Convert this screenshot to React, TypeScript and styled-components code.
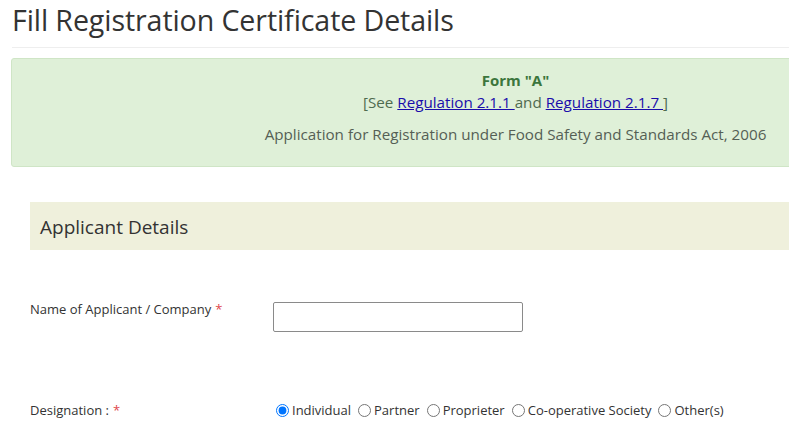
import React from 'react';
import styled, { createGlobalStyle } from 'styled-components';

const GlobalStyle = createGlobalStyle`
  html, body {
    margin: 0;
    padding: 0;
    background: #fff;
    overflow: hidden;
  }
  body {
    font-family: "Open Sans", "Noto Sans", sans-serif;
    color: #333;
  }
`;

const Page = styled.div`
  width: 1030px;
  padding: 0 0 0 11px;
`;

const PageTitle = styled.h1`
  margin: 0;
  padding: 1px 0 0 1px;
  font-size: 28.6px;
  font-weight: 400;
  line-height: 37px;
  color: #333;
  letter-spacing: -0.1px;
`;

const Rule = styled.hr`
  margin: 9px 0 10px 1px;
  border: 0;
  border-top: 1px solid #eee;
`;

const Alert = styled.div`
  box-sizing: border-box;
  width: 1009px;
  height: 109px;
  padding: 11px 15px;
  background: #dff0d8;
  border: 1px solid #cfe5c6;
  border-radius: 3px;
  text-align: center;
  color: #4f6b4f;
`;

const FormName = styled.div`
  font-size: 15px;
  font-weight: 700;
  color: #3c763d;
  line-height: 20px;
`;

const SeeLine = styled.div`
  font-size: 15.2px;
  line-height: 24px;
  color: #4f6b4f;
`;

const RegLink = styled.a`
  color: #1a0dab;
  text-decoration: underline;
`;

const ActLine = styled.div`
  margin-top: 8px;
  font-size: 15.2px;
  line-height: 24px;
  color: #555f55;
`;

const Panel = styled.div`
  padding: 35px 0 0 19px;
`;

const SectionHead = styled.div`
  height: 48px;
  display: flex;
  align-items: center;
  padding: 2px 0 0 10px;
  box-sizing: border-box;
  background: #eff0dc;
  font-size: 19px;
  color: #333;
`;

const FieldRow = styled.div<{ $top: number }>`
  display: flex;
  align-items: flex-start;
  margin-top: ${(p) => p.$top}px;
`;

const Label = styled.label`
  width: 243px;
  font-size: 13px;
  line-height: 18px;
  color: #333;
`;

const Req = styled.span`
  color: #e0474c;
  margin-left: 4px;
`;

const TextInput = styled.input`
  box-sizing: border-box;
  width: 250px;
  height: 30px;
  margin: 2px 0 0;
  border: 1px solid #8a8a8a;
  border-radius: 2px;
  padding: 0 6px;
  font-size: 13px;
  font-family: inherit;
`;

const RadioGroup = styled.div`
  display: flex;
  align-items: center;
  font-size: 13px;
  line-height: 18px;
  color: #333;
  margin-left: 1px;
`;

const RadioOption = styled.label`
  display: inline-flex;
  align-items: center;
  margin-right: 5px;
`;

const Radio = styled.input`
  width: 13px;
  height: 13px;
  margin: 0 3px 0 2px;
  accent-color: #0075ff;
`;

const options = ['Individual', 'Partner', 'Proprieter', 'Co-operative Society', 'Other(s)'];

const App: React.FC = () => {
  return (
    <>
      <GlobalStyle />
      <Page>
        <PageTitle>Fill Registration Certificate Details</PageTitle>
        <Rule />
        <Alert>
          <FormName>Form "A"</FormName>
          <SeeLine>
            [See <RegLink href="#">Regulation 2.1.1 </RegLink>and <RegLink href="#">Regulation 2.1.7 </RegLink>]
          </SeeLine>
          <ActLine>Application for Registration under Food Safety and Standards Act, 2006</ActLine>
        </Alert>
        <Panel>
          <SectionHead>Applicant Details</SectionHead>
          <FieldRow $top={50}>
            <Label>
              Name of Applicant / Company<Req>*</Req>
            </Label>
            <TextInput type="text" />
          </FieldRow>
          <FieldRow $top={69}>
            <Label>
              Designation :<Req>*</Req>
            </Label>
            <RadioGroup>
              {options.map((o, i) => (
                <RadioOption key={o}>
                  <Radio type="radio" name="designation" defaultChecked={i === 0} />
                  {o}
                </RadioOption>
              ))}
            </RadioGroup>
          </FieldRow>
        </Panel>
      </Page>
    </>
  );
};

export default App;
